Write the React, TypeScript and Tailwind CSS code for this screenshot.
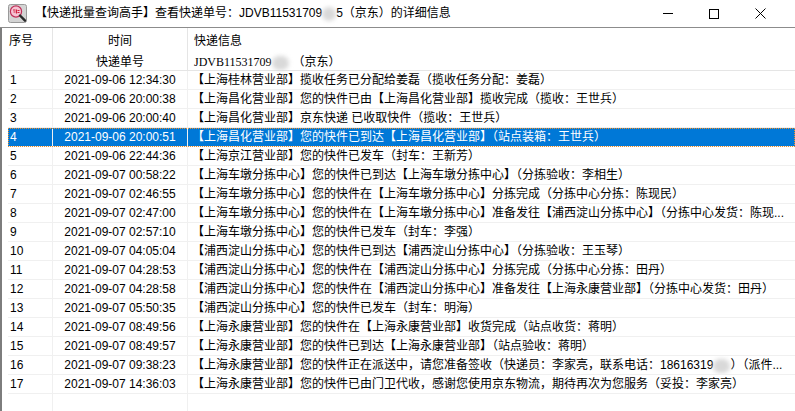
import React from 'react';

type Row = { no: number; time: string; info: React.ReactNode };

const Blur: React.FC<{ w?: string }> = ({ w = 'w-[17px]' }) => (
  <span className={`inline-block ${w} h-[14px] align-middle rounded-full bg-[#d9d9d9] blur-[2px]`}></span>
);

const rows: Row[] = [
  { no: 1, time: '2021-09-06 12:34:30', info: '【上海桂林营业部】揽收任务已分配给姜磊（揽收任务分配：姜磊）' },
  { no: 2, time: '2021-09-06 20:00:38', info: '【上海昌化营业部】您的快件已由【上海昌化营业部】揽收完成（揽收：王世兵）' },
  { no: 3, time: '2021-09-06 20:00:40', info: '【上海昌化营业部】京东快递 已收取快件（揽收：王世兵）' },
  { no: 4, time: '2021-09-06 20:00:51', info: '【上海昌化营业部】您的快件已到达【上海昌化营业部】（站点装箱：王世兵）' },
  { no: 5, time: '2021-09-06 22:44:36', info: '【上海京江营业部】您的快件已发车（封车：王新芳）' },
  { no: 6, time: '2021-09-07 00:58:22', info: '【上海车墩分拣中心】您的快件已到达【上海车墩分拣中心】（分拣验收：李相生）' },
  { no: 7, time: '2021-09-07 02:46:55', info: '【上海车墩分拣中心】您的快件在【上海车墩分拣中心】分拣完成（分拣中心分拣：陈现民）' },
  { no: 8, time: '2021-09-07 02:47:00', info: '【上海车墩分拣中心】您的快件在【上海车墩分拣中心】准备发往【浦西淀山分拣中心】（分拣中心发货：陈现...' },
  { no: 9, time: '2021-09-07 02:57:10', info: '【上海车墩分拣中心】您的快件已发车（封车：李强）' },
  { no: 10, time: '2021-09-07 04:05:04', info: '【浦西淀山分拣中心】您的快件已到达【浦西淀山分拣中心】（分拣验收：王玉琴）' },
  { no: 11, time: '2021-09-07 04:28:53', info: '【浦西淀山分拣中心】您的快件在【浦西淀山分拣中心】分拣完成（分拣中心分拣：田丹）' },
  { no: 12, time: '2021-09-07 04:28:58', info: '【浦西淀山分拣中心】您的快件在【浦西淀山分拣中心】准备发往【上海永康营业部】（分拣中心发货：田丹）' },
  { no: 13, time: '2021-09-07 05:50:35', info: '【浦西淀山分拣中心】您的快件已发车（封车：明海）' },
  { no: 14, time: '2021-09-07 08:49:56', info: '【上海永康营业部】您的快件在【上海永康营业部】收货完成（站点收货：蒋明）' },
  { no: 15, time: '2021-09-07 08:49:57', info: '【上海永康营业部】您的快件已到达【上海永康营业部】（站点验收：蒋明）' },
  {
    no: 16,
    time: '2021-09-07 09:38:23',
    info: (
      <>
        【上海永康营业部】您的快件正在派送中，请您准备签收（快递员：李家亮，联系电话：18616319
        <Blur />）（派件...
      </>
    ),
  },
  { no: 17, time: '2021-09-07 14:36:03', info: '【上海永康营业部】您的快件已由门卫代收，感谢您使用京东物流，期待再次为您服务（妥投：李家亮）' },
];

const AppIcon = () => (
  <svg width="19" height="19" viewBox="0 0 19 19">
    <rect x="0.5" y="0.5" width="18" height="18" rx="2" fill="#d4d4d4" stroke="#9a9a9a" />
    <circle cx="8" cy="7.5" r="5.6" fill="#f6c3d3" stroke="#c0305a" strokeWidth="1.2" />
    <path d="M5 6h2.5M5.5 8h2M8.5 5.5v4M9.5 6.5h2M9.5 8.5h2" stroke="#d0203f" strokeWidth="1.1" />
    <path d="M12 11.5l5 5.2" stroke="#2a2a2a" strokeWidth="2.4" strokeLinecap="round" />
  </svg>
);

const App: React.FC = () => {
  return (
    <div className="w-[795px] h-[411px] overflow-hidden bg-white flex flex-col text-black font-['Liberation_Sans','Noto_Sans_CJK_SC',sans-serif] text-[12px]">
      {/* title bar */}
      <div className="h-[27px] flex items-center shrink-0">
        <div className="ml-[8px] w-[19px] h-[19px]">
          <AppIcon />
        </div>
        <div className="ml-[8px] flex-1 whitespace-nowrap leading-[27px]">
          【快递批量查询高手】查看快递单号：JDVB11531709<Blur w="w-[14px]" />5（京东）的详细信息
        </div>
        <div className="w-[46px] h-[27px] flex items-center justify-center">
          <div className="w-[10px] h-px bg-black"></div>
        </div>
        <div className="w-[46px] h-[27px] flex items-center justify-center">
          <div className="w-[10px] h-[10px] border border-black"></div>
        </div>
        <div className="w-[46px] h-[27px] flex items-center justify-center shrink-0">
          <svg width="11" height="11" viewBox="0 0 11 11">
            <path d="M0.5 0.5l10 10M10.5 0.5l-10 10" stroke="#000" strokeWidth="1" />
          </svg>
        </div>
        <div className="w-[12px] shrink-0"></div>
      </div>
      <div className="h-px bg-[#8c8c8c] shrink-0"></div>

      {/* body */}
      <div className="flex-1 flex min-h-0">
        <div className="w-[2px] bg-[#7d7d7d] shrink-0"></div>
        <div className="flex-1 pl-[6px] flex flex-col min-w-0">
          {/* header */}
          <div className="h-[43px] flex border-b border-[#e5e5e5] shrink-0">
            <div className="w-[45px] border-r border-[#e5e5e5] pl-[1px] pt-[3px] leading-[20px] shrink-0">序号</div>
            <div className="w-[135px] border-r border-[#e5e5e5] flex flex-col items-center shrink-0">
              <div className="mt-[3px] h-[20px] leading-[20px]">时间</div>
              <div className="mt-[2px] h-[18px] leading-[18px]">快递单号</div>
            </div>
            <div className="flex-1 pl-[6px] flex flex-col">
              <div className="mt-[3px] h-[20px] leading-[20px]">快递信息</div>
              <div className="mt-[2px] h-[18px] leading-[18px] whitespace-nowrap">
                <span className="font-['Liberation_Serif','Noto_Sans_CJK_SC',serif]">JDVB11531709</span>
                <Blur />
                <span className="ml-[4px]">（京东）</span>
              </div>
            </div>
          </div>

          {/* rows */}
          {rows.map((r) => {
            const sel = r.no === 4;
            return (
              <div
                key={r.no}
                className={`h-[19px] flex border-b border-[#f0f0f0] shrink-0 leading-[18px] whitespace-nowrap ${
                  sel ? 'bg-[#0078d7] text-white outline-1 outline-dotted outline-[#f0902a] -outline-offset-1' : ''
                }`}
              >
                <div className="w-[45px] border-r border-[#f0f0f0] pl-[2px] shrink-0">{r.no}</div>
                <div className="w-[135px] border-r border-[#f0f0f0] text-center shrink-0">{r.time}</div>
                <div className="flex-1 pl-[4px] overflow-hidden">{r.info}</div>
              </div>
            );
          })}

          {/* empty area with grid lines */}
          <div className="flex-1 flex">
            <div className="w-[45px] border-r border-[#f0f0f0] shrink-0"></div>
            <div className="w-[135px] border-r border-[#f0f0f0] shrink-0"></div>
            <div className="flex-1"></div>
          </div>
        </div>
      </div>
    </div>
  );
};

export default App;
